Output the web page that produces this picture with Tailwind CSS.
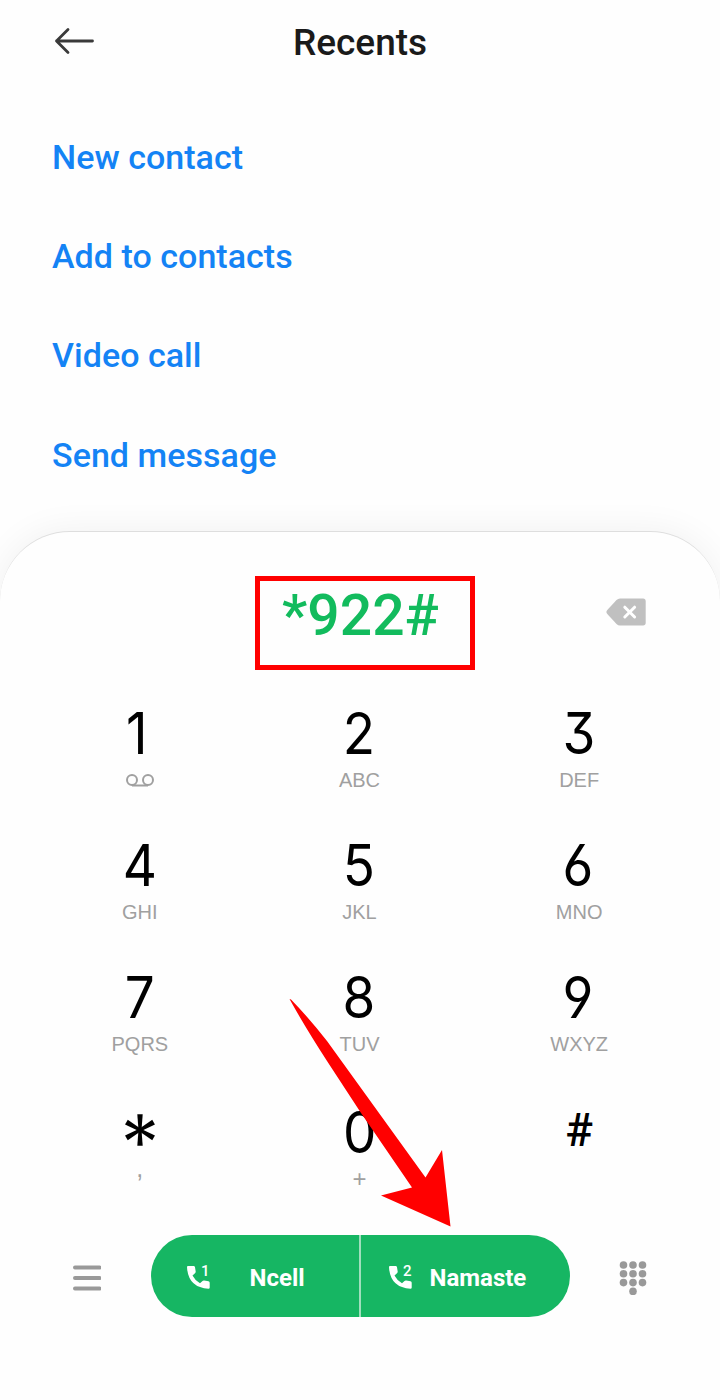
<!DOCTYPE html>
<html lang="en">
<head>
<meta charset="utf-8">
<title>Recents</title>
<script src="https://cdn.jsdelivr.net/npm/@tailwindcss/browser@4"></script>
</head>
<body class="bg-white">
<main class="relative flex h-[1400px] w-[720px] flex-col overflow-hidden bg-[#fefefe] font-['Roboto',sans-serif]">
  <header class="grid h-[84px] shrink-0 grid-cols-[1fr_auto_1fr] items-center px-[52px]">
    <svg class="-mt-[3px] h-8 w-11" viewBox="0 0 44 32" fill="none" stroke="#3a3a3a" stroke-width="2.8" stroke-linecap="round" stroke-linejoin="round"><path d="M4.500 16H40.500M16 4.500L4.500 16L16 27.500"/></svg>
    <h1 class="pt-[2px] text-[37px] leading-[44px] font-medium text-[#1a1a1a]">Recents</h1>
  </header>
  <nav class="flex h-[447px] shrink-0 flex-col px-[52px] pt-6 text-[34px] font-medium tracking-[0.04px] text-[#1483f5]">
    <a class="h-[99px] leading-[99px]">New contact</a>
    <a class="h-[99px] leading-[99px]">Add to contacts</a>
    <a class="h-[100px] leading-[99px]">Video call</a>
    <a class="h-[99px] leading-[99px]">Send message</a>
  </nav>
  <section class="flex grow flex-col rounded-t-[70px] border-t border-[#dedede] bg-[#fefefe] shadow-[0_0_36px_rgba(0,0,0,0.06)]">
    <div class="flex h-[138px] shrink-0 items-start pt-11 pl-[255px]">
      <div class="flex h-[94px] w-[220px] justify-center border-[5px] border-[#ff0000] pr-[9px] text-[57px] leading-[70px] font-medium text-[#12bb5d]">*922#</div>
      <svg class="mt-[21px] ml-[131px] h-[30px] w-10" viewBox="0 0 40 30"><path d="M14 1.500H37Q39.700 1.500 39.700 4.200V25.800Q39.700 28.500 37 28.500H14Q12 28.500 10.500 27L1.300 17Q-0.500 15 1.300 13L10.500 3Q12 1.500 14 1.500Z" fill="#c0c0c0"/><path d="M18.800 10.200L28.600 20M28.600 10.200L18.800 20" stroke="#fff" stroke-width="3" stroke-linecap="round"/></svg>
    </div>
    <div class="ml-[30px] grid w-[659px] shrink-0 grid-cols-3 grid-rows-[repeat(4,132px)] pt-[26px] text-center font-['Liberation_Sans',sans-serif] text-[20px] text-[#a0a0a0] [&_b]:block [&_b]:h-[76px] [&_b]:scale-x-[0.93] [&_b]:font-['Inter',sans-serif] [&_b]:text-[57px] [&_b]:leading-[76px] [&_b]:font-normal [&_b]:text-black [&_b]:[font-feature-settings:'cv03','cv04','cv09'] [&_span]:block [&_span]:leading-[17px]">
      <div><b class="-translate-x-[3px]">1</b><svg class="mx-auto -mt-px h-5 w-7" viewBox="0 0 28 20" fill="none" stroke="#a0a0a0" stroke-width="2"><circle cx="6" cy="9" r="5"/><circle cx="22" cy="9" r="5"/><path d="M6 14.500H22"/></svg></div>
      <div><b class="-translate-x-px">2</b><span>ABC</span></div>
      <div><b>3</b><span>DEF</span></div>
      <div><b>4</b><span>GHI</span></div>
      <div><b class="-translate-x-px">5</b><span>JKL</span></div>
      <div><b class="-translate-x-px">6</b><span>MNO</span></div>
      <div><b>7</b><span>PQRS</span></div>
      <div><b class="-translate-x-px">8</b><span>TUV</span></div>
      <div><b class="-translate-x-px">9</b><span>WXYZ</span></div>
      <div><svg class="mx-auto h-[76px] w-8" viewBox="0 0 32 76" fill="#000"><g id="arm"><path d="M13.300 22.300H18.700L17.500 38H14.500Z"/><path d="M13.300 53.700H18.700L17.500 38H14.500Z"/></g><use href="#arm" transform="rotate(60 16 38)"/><use href="#arm" transform="rotate(120 16 38)"/></svg><span class="-mt-2 text-[25px]">,</span></div>
      <div><b class="translate-y-[3px]">0</b><span class="pt-[2px] text-[24px]">+</span></div>
      <div class="pt-[2px] font-['Roboto',sans-serif] text-[46px] leading-[73px] font-medium text-black">#</div>
    </div>
    <footer class="mt-[11px] flex items-center">
      <svg class="mt-[3px] ml-[73px] h-[26px] w-7" viewBox="0 0 28 26" stroke="#999" stroke-width="4" stroke-linecap="round"><path d="M2 2.500H26.500M2 13H26.500M2 23.500H26.500"/></svg>
      <div class="ml-[49.500px] flex h-[82px] w-[419px] overflow-hidden rounded-full bg-[#16b663] text-[24px] font-bold text-white">
        <button class="flex w-[210px] items-center border-r-2 border-[#a0dfbd] pt-[2px] pl-9">
          <svg class="h-9 w-7" viewBox="0 -6 28 36" fill="#fff"><path d="M1 1H6.600Q7.800 1 8 2.200L8.700 6.500Q8.800 7.500 8 8.300L5.500 10.500Q8 15.500 13 18.300L15.500 15.900Q16.200 15.300 17.200 15.500L21.500 16.300Q22.700 16.500 22.700 17.700V22.500Q22.700 23.700 21.500 23.700Q1 22.500 0 2Q0 1 1 1Z"/><text x="14" y="11" font-family="Roboto" font-size="15" font-weight="500">1</text></svg>
          <span class="ml-[35px] pt-[2px]">Ncell</span>
        </button>
        <button class="flex items-center pt-[2px] pl-7">
          <svg class="h-9 w-7" viewBox="0 -6 28 36" fill="#fff"><path d="M1 1H6.600Q7.800 1 8 2.200L8.700 6.500Q8.800 7.500 8 8.300L5.500 10.500Q8 15.500 13 18.300L15.500 15.900Q16.200 15.300 17.200 15.500L21.500 16.300Q22.700 16.500 22.700 17.700V22.500Q22.700 23.700 21.500 23.700Q1 22.500 0 2Q0 1 1 1Z"/><text x="14" y="11" font-family="Roboto" font-size="15" font-weight="500">2</text></svg>
          <span class="ml-[13px] pt-[2px]">Namaste</span>
        </button>
      </div>
      <svg class="mt-[3px] ml-[49.500px] h-[34px] w-7" viewBox="0 0 28 34" fill="#999"><g id="row"><circle cx="4.500" cy="4" r="3.800"/><circle cx="14" cy="4" r="3.800"/><circle cx="23.500" cy="4" r="3.800"/></g><use href="#row" y="8.800"/><use href="#row" y="17.600"/><circle cx="14" cy="30.400" r="3.800"/></svg>
    </footer>
  </section>
  <svg class="absolute top-[998px] left-[288px] h-[230px] w-[164px]" viewBox="288 998 164 230" fill="#ff0000"><path d="M289.500 999L291 999.500Q309 1018 327 1041L425.500 1177.500L442 1150L450.500 1226.500L381 1195.500L412 1187.500L360 1111.500L327 1061Q305 1027 289.500 999Z"/></svg>
</main>
</body>
</html>
